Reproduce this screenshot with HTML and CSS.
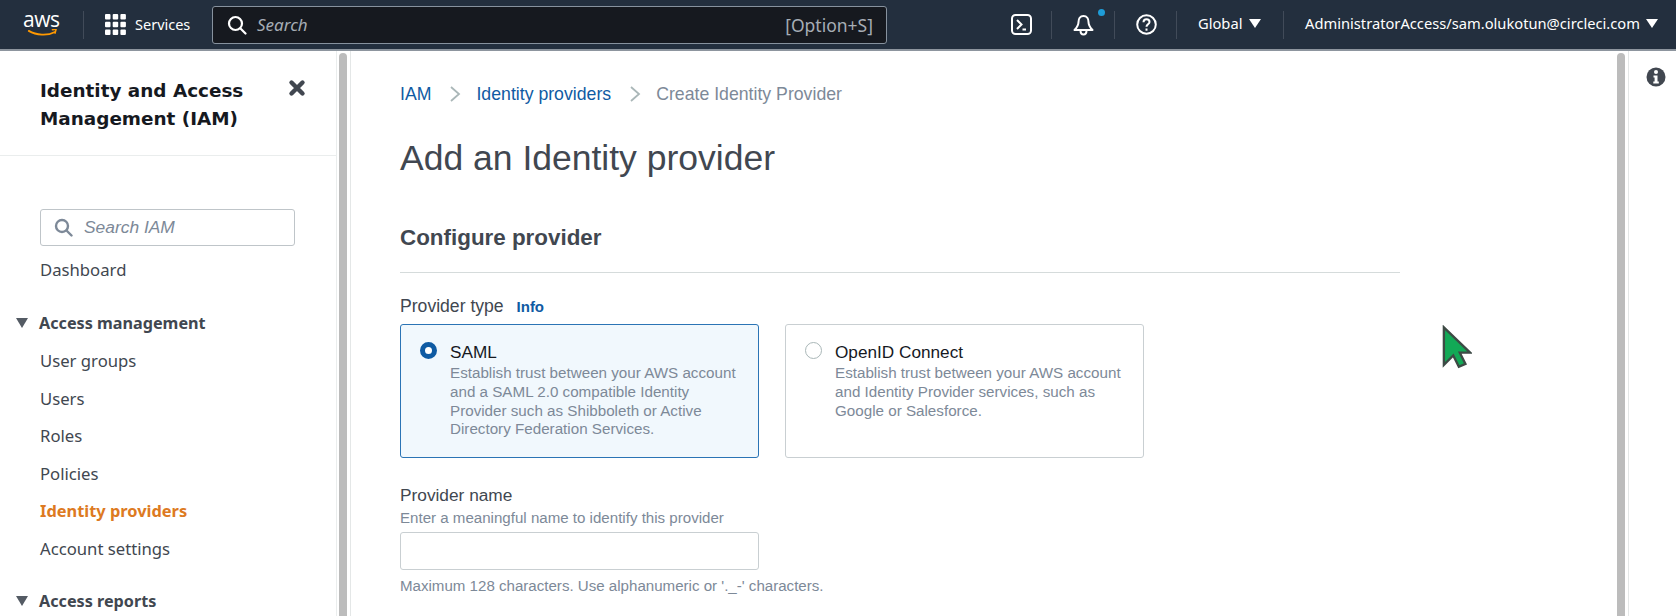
FILE: index.html
```html
<!DOCTYPE html>
<html lang="en">
<head>
<meta charset="utf-8">
<title>Add an Identity provider</title>
<link rel="stylesheet" href="styles.css">
</head>
<body>
<header class="topbar">
  <a class="aws-logo">
    <span class="aws-text">aws</span>
    <svg class="aws-smile" width="40" height="12" viewBox="0 0 40 12"><path d="M1 2.500c10 6 25 7 35 1.500" fill="none" stroke="#f90" stroke-width="2.400" stroke-linecap="round"/><path d="M32.500 1l5-.5-1.400 5" fill="none" stroke="#f90" stroke-width="2" stroke-linecap="round" stroke-linejoin="round"/></svg>
  </a>
  <span class="tb-div first"></span>
  <svg class="grid-icon" width="21" height="21" viewBox="0 0 21 21" fill="#fff">
    <rect width="5.500" height="5.500" rx="1"/><rect x="7.700" width="5.500" height="5.500" rx="1"/><rect x="15.400" width="5.500" height="5.500" rx="1"/>
    <rect y="7.700" width="5.500" height="5.500" rx="1"/><rect x="7.700" y="7.700" width="5.500" height="5.500" rx="1"/><rect x="15.400" y="7.700" width="5.500" height="5.500" rx="1"/>
    <rect y="15.400" width="5.500" height="5.500" rx="1"/><rect x="7.700" y="15.400" width="5.500" height="5.500" rx="1"/><rect x="15.400" y="15.400" width="5.500" height="5.500" rx="1"/>
  </svg>
  <span class="services">Services</span>
  <div class="global-search">
    <svg width="20" height="20" viewBox="0 0 20 20" fill="none" stroke="#fff" stroke-width="2.200"><circle cx="8.500" cy="8.500" r="6.500"/><path d="M13.500 13.500l5 5" stroke-linecap="round"/></svg>
    <span class="gs-text">Search</span>
    <span class="gs-key">[Option+S]</span>
  </div>
  <svg class="terminal" width="21" height="21" viewBox="0 0 21 21" fill="none" stroke="#fff" stroke-width="2"><rect x="1" y="1" width="19" height="19" rx="3.500"/><path d="M6 6l4.500 4.500L6 15M11.500 15.500h3.500"/></svg>
  <span class="tb-div d2"></span>
  <span class="bell-wrap">
    <svg width="21" height="22" viewBox="0 0 21 22" fill="none" stroke="#fff" stroke-width="2" stroke-linejoin="round"><path d="M10.500 2c-3.500 0-5 3-5 6 0 3-2 6-4 8h18c-2-2-4-5-4-8 0-3-1.500-6-5-6z"/><path d="M7.500 16.500c0 2.500 1.500 4 3 4s3-1.500 3-4"/></svg>
    <i class="bell-dot"></i>
  </span>
  <span class="tb-div d3"></span>
  <svg class="help" width="21" height="21" viewBox="0 0 21 21" fill="none" stroke="#fff" stroke-width="2"><circle cx="10.500" cy="10.500" r="9.300"/><path d="M7.500 8.200c0-1.800 1.300-2.900 3-2.900s3 1.100 3 2.700c0 2.200-3 2.400-3 4.700"/><path d="M10.500 14.500v2.200"/></svg>
  <span class="tb-div d4"></span>
  <span class="tb-label global">Global</span><i class="caret c1"></i>
  <span class="tb-div d5"></span>
  <span class="tb-label user">AdministratorAccess/sam.olukotun@circleci.com</span><i class="caret c2"></i>
</header>

<div class="shell">
  <aside class="sidebar">
    <div class="side-head">
      <h2>Identity and Access<br>Management (IAM)</h2>
      <svg class="close" width="18" height="18" viewBox="0 0 18 18" stroke="#414750" stroke-width="4.400" stroke-linecap="round"><path d="M3.500 3.500l11 11M14.500 3.500l-11 11"/></svg>
    </div>
    <div class="side-body">
      <div class="side-search">
        <svg width="19" height="19" viewBox="0 0 19 19" fill="none" stroke="#7d8998" stroke-width="2.400"><circle cx="8" cy="8" r="6"/><path d="M12.500 12.500l5 5" stroke-linecap="round"/></svg>
        <span>Search IAM</span>
      </div>
      <a class="nav dash">Dashboard</a>
      <div class="section"><i class="tri"></i>Access management</div>
      <a class="nav">User groups</a>
      <a class="nav">Users</a>
      <a class="nav">Roles</a>
      <a class="nav">Policies</a>
      <a class="nav active">Identity providers</a>
      <a class="nav">Account settings</a>
      <div class="section second"><i class="tri"></i>Access reports</div>
    </div>
  </aside>
  <div class="scroll-track"><div class="thumb"></div></div>

  <main class="content">
    <nav class="crumbs">
      <a>IAM</a>
      <svg width="12" height="18" viewBox="0 0 12 18" fill="none" stroke="#aab7b8" stroke-width="1.800"><path d="M2 2l8 7-8 7"/></svg>
      <a>Identity providers</a>
      <svg width="12" height="18" viewBox="0 0 12 18" fill="none" stroke="#aab7b8" stroke-width="1.800"><path d="M2 2l8 7-8 7"/></svg>
      <span>Create Identity Provider</span>
    </nav>
    <h1>Add an Identity provider</h1>
    <h2 class="panel-title">Configure provider</h2>
    <div class="field-label">Provider type <a class="info">Info</a></div>
    <div class="cards">
      <div class="card selected">
        <span class="radio on"></span>
        <div class="card-text">
          <div class="card-title">SAML</div>
          <p>Establish trust between your AWS account and a SAML 2.0 compatible Identity Provider such as Shibboleth or Active Directory Federation Services.</p>
        </div>
      </div>
      <div class="card">
        <span class="radio"></span>
        <div class="card-text">
          <div class="card-title">OpenID Connect</div>
          <p>Establish trust between your AWS account and Identity Provider services, such as Google or Salesforce.</p>
        </div>
      </div>
    </div>
    <label class="name-label">Provider name</label>
    <div class="hint">Enter a meaningful name to identify this provider</div>
    <input class="name-input" type="text">
    <div class="hint after">Maximum 128 characters. Use alphanumeric or '._-' characters.</div>
  </main>

  <div class="scroll-track right"><div class="thumb"></div></div>
  <aside class="tools">
    <svg width="20" height="20" viewBox="0 0 20 20"><circle cx="10" cy="10" r="9.500" fill="#414750"/><circle cx="10" cy="5" r="2" fill="#fff"/><path d="M7.500 8.500h4v6h1.300v2h-5.500v-2h1.300v-4h-1.100z" fill="#fff"/></svg>
  </aside>
</div>

<svg class="cursor" width="30" height="46" viewBox="0 0 32 48"><path d="M2 2v40l10-10 6 12 7-3-6-12h11z" fill="#12a956" stroke="#3d4a45" stroke-width="2.500" stroke-linejoin="miter"/></svg>
</body>
</html>
```

FILE: styles.css
```css
* { box-sizing: border-box; }
html, body { margin: 0; height: 616px; overflow: hidden; background: #fff; }
body { font-family: "Liberation Sans", Arial, sans-serif; color: #414750; }

.topbar {
  height: 51px;
  background: #232f3e;
  border-bottom: 2px solid #8d959e;
  display: flex;
  align-items: center;
  padding-left: 23px;
  color: #fff;
}
.aws-logo { display: flex; flex-direction: column; width: 40px; height: 27px; flex: none; }
.aws-text { font: 21px/17px "Open Sans", sans-serif; color: #fff; letter-spacing: -0.500px; }
.aws-smile { display: block; margin-top: 1px; }
.tb-div { width: 1px; height: 28px; background: #414b59; flex: none; }
.tb-div.first { margin-left: 20px; }
.grid-icon { margin-left: 21px; flex: none; }
.services { margin-left: 9px; padding-bottom: 2px; font: 14.500px "Noto Sans", sans-serif; width: 56px; white-space: nowrap; }
.global-search {
  margin-left: 21px;
  width: 675px;
  height: 38px;
  background: #16191f;
  border: 1px solid #87929e;
  border-radius: 3px;
  display: flex;
  align-items: center;
  padding: 0 13px 0 14px;
  flex: none;
}
.gs-text { margin-left: 10px; font: italic 17px "Noto Sans", sans-serif; color: #a6adb5; }
.gs-key { margin-left: auto; font: 17.500px "Noto Sans", sans-serif; color: #a6adb5; }
.terminal { margin-left: 124px; flex: none; }
.tb-div.d2 { margin-left: 19px; }
.bell-wrap { position: relative; margin-left: 21px; width: 21px; height: 22px; flex: none; }
.bell-wrap svg { display: block; }
.bell-dot { position: absolute; right: -11px; top: -5px; width: 7px; height: 7px; border-radius: 50%; background: #1e9cd7; }
.tb-div.d3 { margin-left: 20px; }
.help { margin-left: 21px; flex: none; }
.tb-div.d4 { margin-left: 19px; }
.tb-label { font: 14.700px "Noto Sans", sans-serif; white-space: nowrap; padding-bottom: 3px; }
.global { margin-left: 21px; width: 44px; }
.caret { width: 0; height: 0; border-left: 6px solid transparent; border-right: 6px solid transparent; border-top: 9px solid #fff; flex: none; margin: 0 0 2px 7px; }
.tb-div.d5 { margin-left: 22px; }
.user { margin-left: 21px; width: 334px; }

.shell { display: flex; height: 565px; overflow: hidden; }
.sidebar { width: 337px; flex: none; border-right: 1px solid #eaeded; }
.side-head {
  height: 105px;
  border-bottom: 1px solid #eaeded;
  padding: 26px 30px 0 40px;
  display: flex;
  justify-content: space-between;
}
.side-head h2 { margin: 0; font: 700 18.400px/27.500px "DejaVu Sans", sans-serif; color: #16191f; white-space: nowrap; }
.close { margin-top: 2px; flex: none; }
.side-body { padding: 53px 0 0 40px; }
.side-search {
  width: 255px;
  height: 37px;
  border: 1px solid #bfc5c9;
  border-radius: 3px;
  display: flex;
  align-items: center;
  padding-left: 13px;
  gap: 11px;
  font: italic 17.400px "Liberation Sans", sans-serif;
  color: #7d8998;
}
.nav { display: block; height: 37.500px; font: 16.700px/37.500px "Noto Sans", sans-serif; color: #414750; white-space: nowrap; }
.nav.dash { margin-top: 5px; }
.nav.active { color: #dd7a22; font-weight: 700; font-size: 16.400px; }
.section { position: relative; margin: 15px 0 0 -1px; height: 38.500px; font: 700 16.200px/38px "Noto Sans", sans-serif; color: #414750; white-space: nowrap; }
.section.second { margin-top: 15px; }
.tri { position: absolute; left: -23px; top: 14px; width: 0; height: 0; border-left: 6.500px solid transparent; border-right: 6.500px solid transparent; border-top: 10px solid #545b64; }

.scroll-track { width: 14px; flex: none; padding: 2px 3px 0 2px; border-right: 1px solid #e4e7e7; }
.thumb { width: 8px; height: 700px; background: #bcbcbc; border-radius: 4px; }

.content { flex: 1; padding: 33px 0 0 49px; min-width: 0; }
.crumbs { display: flex; align-items: center; height: 20px; font-size: 17.700px; white-space: nowrap; }
.crumbs a { color: #0f5ba3; }
.crumbs span { color: #7d8998; }
.crumbs svg { margin: 0 15px 0 18px; flex: none; }
h1 { margin: 32px 0 0; font: 400 35.500px/44px "Liberation Sans", sans-serif; color: #414750; white-space: nowrap; }
.panel-title {
  width: 1000px;
  margin: 44px 0 0;
  padding-bottom: 20px;
  border-bottom: 1px solid #d5dbdb;
  font: 700 22.400px/28px "Liberation Sans", sans-serif;
  color: #414750;
}
.field-label { margin-top: 22px; font-size: 17.600px; line-height: 22px; }
.info { margin-left: 8px; color: #0f5ba3; font-size: 15px; font-weight: 700; }
.cards { display: flex; gap: 26px; margin-top: 6px; }
.card {
  width: 359px;
  height: 134px;
  border: 1px solid #c9cfd2;
  border-radius: 3px;
  display: flex;
  padding: 17px 14px 0 19px;
  background: #fff;
}
.card.selected { background: #f1f8fd; border-color: #2b74b5; }
.radio { width: 17px; height: 17px; border-radius: 50%; border: 1px solid #aab7b8; background: #fff; flex: none; }
.radio.on { border: 5px solid #0f5ba3; }
.card-text { margin-left: 13px; }
.card-title { font-size: 17.200px; line-height: 20px; color: #16191f; }
.card p { margin: 2px 0 0; font-size: 15.200px; line-height: 18.800px; color: #7d8998; }
.name-label { display: block; margin-top: 26px; font-size: 17.300px; line-height: 22px; }
.hint { font-size: 15.100px; line-height: 18px; color: #7d8998; margin-top: 3px; white-space: nowrap; }
.name-input { display: block; width: 359px; height: 38px; margin-top: 5px; border: 1px solid #c9cfd2; border-radius: 3px; background: #fff; }
.hint.after { margin-top: 7px; }

.tools { width: 47px; flex: none; padding: 16px 0 0 17px; }

.cursor { position: absolute; left: 1442px; top: 325px; }
```
